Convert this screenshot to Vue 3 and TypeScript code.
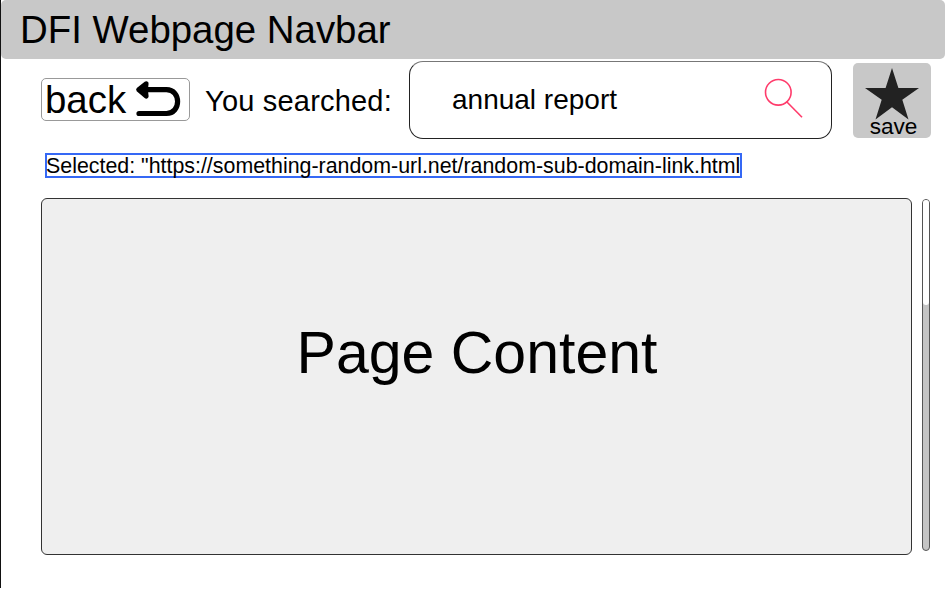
<script setup lang="ts">
import { ref } from 'vue'

const query = ref('annual report')
const selectedUrl = ref('https://something-random-url.net/random-sub-domain-link.html')
</script>

<template>
  <div class="page">
    <header class="navbar">DFI Webpage Navbar</header>

    <div class="toolbar">
      <button class="back" type="button">
        <span>back</span>
        <svg class="back-icon" width="46" height="38" viewBox="0 0 46 38" fill="none" stroke="#000">
          <path d="M5 8.7H31.5C46.3 8.7 46.3 32.5 31.5 32.5H4" stroke-width="5.2" stroke-linecap="round" />
          <path d="M11.2 2.6L3.6 8.7L11.2 15.2L10.5 8.7Z" fill="#000" stroke-width="4.8" stroke-linecap="round" stroke-linejoin="round" />
        </svg>
      </button>
      <span class="label">You searched:</span>
      <div class="search">
        <span class="query">{{ query }}</span>
        <svg class="search-icon" width="40" height="42" viewBox="0 0 40 42" fill="none" stroke="#ff3b6b" stroke-width="1.6">
          <circle cx="14.3" cy="14.3" r="12.8" />
          <path d="M22.7 23.7L38 39.3" />
        </svg>
      </div>
      <button class="save" type="button">
        <svg class="star" width="54" height="52" viewBox="0 0 54 52">
          <path d="M27 0L33.4 20H54L37.3 31.7L43.5 51.5L27 39.3L10.5 51.5L16.7 31.7L0 20H20.6Z" fill="#222" />
        </svg>
        <span class="save-text">save</span>
      </button>
    </div>

    <div class="selected">Selected: "{{ selectedUrl }}</div>

    <div class="body">
      <main class="content">Page Content</main>
      <div class="scrollbar"><div class="thumb"></div></div>
    </div>
  </div>
</template>

<style>
body {
  margin: 0;
  background: #fff;
}
</style>

<style scoped>
.page {
  box-sizing: border-box;
  width: 945px;
  height: 588px;
  overflow: hidden;
  border-left: 1px solid #111;
  background: #fff;
  color: #000;
  font-family: "Liberation Sans", Arial, sans-serif;
  white-space: nowrap;
}
.navbar {
  box-sizing: border-box;
  height: 59px;
  padding-left: 19px;
  border-radius: 5px;
  background: #c8c8c8;
  font-size: 38.4px;
  line-height: 59px;
}
.toolbar {
  display: flex;
  align-items: flex-start;
  height: 80px;
  padding-left: 40px;
}
button {
  display: flex;
  padding: 0;
  font-family: inherit;
  color: inherit;
}
.back {
  box-sizing: border-box;
  width: 149px;
  height: 43px;
  margin-top: 19px;
  padding-left: 3px;
  border: 1px solid #999;
  border-radius: 5px;
  background: #fff;
  font-size: 38.4px;
  line-height: 41px;
}
.back span {
  width: 90px;
  text-align: left;
}
.back-icon {
  flex: none;
  margin-top: 2px;
}
.label {
  width: 203px;
  margin-left: 15px;
  margin-top: 26px;
  font-size: 29px;
  letter-spacing: 0.2px;
  line-height: 32px;
}
.search {
  box-sizing: border-box;
  display: flex;
  width: 423px;
  height: 78px;
  margin-top: 2px;
  margin-left: 1px;
  padding-left: 42px;
  border: 1px solid #222;
  border-top-color: #777;
  border-radius: 14px;
}
.query {
  width: 312px;
  font-size: 28px;
  line-height: 76px;
}
.search-icon {
  margin-top: 16px;
}
.save {
  flex-direction: column;
  align-items: center;
  width: 78px;
  height: 75px;
  margin-left: 21px;
  margin-top: 4px;
  border: 0;
  border-radius: 5px;
  background: #c8c8c8;
}
.star {
  flex: none;
  margin-top: 5px;
}
.save-text {
  margin-top: -6px;
  margin-left: 3px;
  font-size: 22.6px;
  line-height: 26px;
}
.selected {
  box-sizing: border-box;
  width: 697px;
  height: 25px;
  margin-top: 14px;
  margin-left: 44px;
  border: 2px solid #3568f5;
  font-size: 21.39px;
  line-height: 22px;
  text-indent: -1px;
}
.body {
  display: flex;
  gap: 10px;
  margin-top: 20px;
  padding-left: 40px;
}
.content {
  box-sizing: border-box;
  width: 871px;
  height: 357px;
  padding-top: 119px;
  padding-left: 1px;
  border: 1px solid #333;
  border-radius: 6px;
  background: #efefef;
  font-size: 59px;
  line-height: 70px;
  text-align: center;
}
.scrollbar {
  box-sizing: border-box;
  width: 8px;
  height: 352px;
  margin-top: 1px;
  border: 1px solid #555;
  border-radius: 4px;
  background: #c4c4c4;
  overflow: hidden;
}
.thumb {
  height: 105px;
  border-radius: 0 0 3px 3px;
  background: #fff;
}
</style>
